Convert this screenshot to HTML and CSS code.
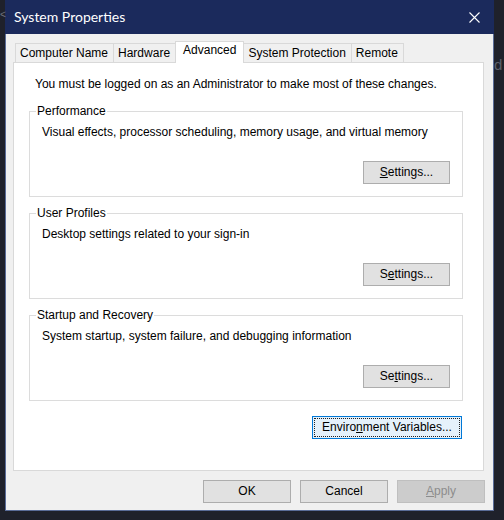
FILE: index.html
```html
<!DOCTYPE html>
<html>
<head>
<meta charset="utf-8">
<title>System Properties</title>
<link rel="stylesheet" href="styles.css">
</head>
<body>
<div class="desk">
  <span class="peek-left">&lt;</span>
  <span class="peek-right">d</span>
  <div class="win">
    <div class="titlebar">
      <span class="title">System Properties</span>
      <span class="close">
        <svg width="11" height="11" viewBox="0 0 11 11"><path d="M0.5 0.5 L10.5 10.5 M10.5 0.5 L0.5 10.5" stroke="#fff" stroke-width="1.1" fill="none"/></svg>
      </span>
    </div>
    <div class="body">
      <div class="tabs">
        <div class="tab">Computer Name</div>
        <div class="tab">Hardware</div>
        <div class="tab active">Advanced</div>
        <div class="tab">System Protection</div>
        <div class="tab">Remote</div>
      </div>
      <div class="panel">
        <p class="intro">You must be logged on as an Administrator to make most of these changes.</p>
        <fieldset class="group">
          <legend>Performance</legend>
          <p class="desc">Visual effects, processor scheduling, memory usage, and virtual memory</p>
          <div class="row-end"><button class="btn set"><u>S</u>ettings...</button></div>
        </fieldset>
        <fieldset class="group">
          <legend>User Profiles</legend>
          <p class="desc">Desktop settings related to your sign-in</p>
          <div class="row-end"><button class="btn set">S<u>e</u>ttings...</button></div>
        </fieldset>
        <fieldset class="group">
          <legend>Startup and Recovery</legend>
          <p class="desc">System startup, system failure, and debugging information</p>
          <div class="row-end"><button class="btn set">Se<u>t</u>tings...</button></div>
        </fieldset>
        <div class="row-end env-row"><button class="btn env"><span class="focus">Enviro<u>n</u>ment Variables...</span></button></div>
      </div>
      <div class="footer">
        <button class="btn dlg">OK</button>
        <button class="btn dlg">Cancel</button>
        <button class="btn dlg disabled"><u>A</u>pply</button>
      </div>
    </div>
  </div>
</div>
</body>
</html>
```

FILE: styles.css
```css
html, body {
  margin: 0;
  padding: 0;
}
body {
  background: #1f212b;
  width: 504px;
  height: 520px;
  overflow: hidden;
  font-family: "Liberation Sans", Arial, sans-serif;
  font-size: 12px;
  color: #000;
}
.desk {
  position: relative;
  width: 504px;
  height: 520px;
}
.peek-left {
  position: absolute;
  left: 0;
  top: 9px;
  color: #6f727d;
  font-size: 10px;
}
.peek-right {
  position: absolute;
  left: 494px;
  top: 56px;
  color: #5c606b;
  font-size: 15px;
}
.win {
  margin-left: 5px;
  width: 489px;
  height: 511px;
  box-sizing: border-box;
  background: #f0f0f0;
  border: 1px solid #5a6c98;
  border-top: none;
  display: flex;
  flex-direction: column;
}
.titlebar {
  height: 34px;
  margin: 0 -1px;
  background: #1b2a5c;
  color: #fff;
  display: flex;
  align-items: center;
  justify-content: space-between;
  padding: 0 14px 0 9px;
  flex: none;
}
.title {
  font-family: Lato, "Noto Sans", sans-serif;
  font-size: 14px;
  padding-bottom: 1px;
}
.close {
  display: flex;
  width: 11px;
  height: 11px;
}
.body {
  flex: 1;
  padding: 7px 9px 0 7px;
  display: flex;
  flex-direction: column;
}
.tabs {
  display: flex;
  align-items: flex-end;
  height: 21px;
  padding-left: 2px;
  position: relative;
  z-index: 1;
}
.tab {
  height: 19px;
  box-sizing: border-box;
  border: 1px solid #d9d9d9;
  border-bottom: none;
  background: #f0f0f0;
  padding: 2px 5px 0 4px;
  margin-left: -1px;
  line-height: 15px;
  white-space: nowrap;
}
.tab:first-child {
  margin-left: 0;
}
.tab.active {
  height: 22px;
  margin-bottom: -1px;
  background: #fff;
  padding: 1px 7px 0 7px;
  position: relative;
}
.panel {
  height: 409px;
  box-sizing: border-box;
  background: #fff;
  border: 1px solid #d9d9d9;
  padding: 14px 20px 0 15px;
}
.intro {
  margin: 0 0 12px 6px;
  line-height: 15px;
}
.group {
  margin: 0 0 9px 0;
  border: 1px solid #dcdcdc;
  padding: 6px 12px 12px 12px;
  min-width: 0;
}
.group legend {
  padding: 0 1px;
  margin-left: -6px;
  line-height: 15px;
}
.desc {
  margin: 0;
  line-height: 15px;
}
.row-end {
  display: flex;
  justify-content: flex-end;
}
.group .row-end {
  margin-top: 21px;
}
.btn {
  font-family: "Liberation Sans", Arial, sans-serif;
  font-size: 12px;
  color: #000;
  background: #e1e1e1;
  border: 1px solid #adadad;
  height: 23px;
  margin: 0;
  padding: 0;
  box-sizing: border-box;
  line-height: 15px;
}
.set {
  width: 87px;
}
.env-row {
  margin-top: 15px;
  margin-right: 1px;
}
.env {
  width: 150px;
  border-color: #0078d7;
  background: #e5f1fb;
  padding: 1px;
}
.focus {
  display: block;
  height: 100%;
  box-sizing: border-box;
  border: 1px dotted #222;
  line-height: 17px;
}
.footer {
  display: flex;
  justify-content: flex-end;
  gap: 9px;
  margin-top: 9px;
  margin-right: -1px;
}
.dlg {
  width: 88px;
}
.disabled {
  background: #cccccc;
  border-color: #bfbfbf;
  color: #8c8c8c;
}
u {
  text-decoration-thickness: 1px;
  text-underline-offset: 1px;
}
```
